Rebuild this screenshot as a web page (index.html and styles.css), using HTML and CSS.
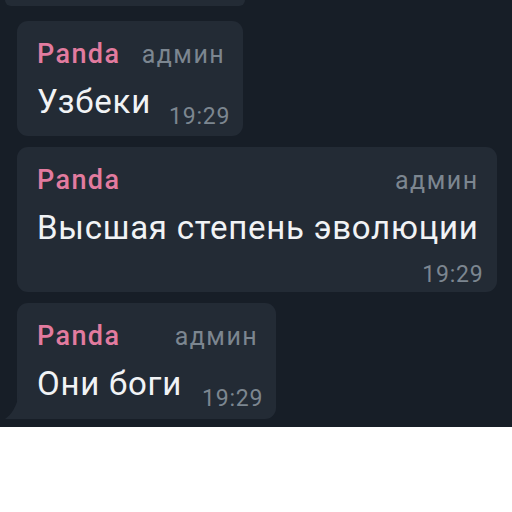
FILE: index.html
```html
<!DOCTYPE html>
<html lang="ru">
<head>
  <meta charset="UTF-8" />
  <meta name="viewport" content="width=device-width, initial-scale=1.0" />
  <title>Чат</title>
  <link rel="stylesheet" href="styles.css">
</head>
<body>
  <div class="chat">
    <div class="prev-bubble"></div>

    <div class="bubble">
      <div class="bubble-head">
        <span class="name">Panda</span>
        <span class="role">админ</span>
      </div>
      <div class="bubble-body">
        <span class="text">Узбеки</span>
        <span class="time">19:29</span>
      </div>
    </div>

    <div class="bubble">
      <div class="bubble-head">
        <span class="name">Panda</span>
        <span class="role">админ</span>
      </div>
      <div class="bubble-body wrap">
        <span class="text">Высшая степень эволюции</span>
        <span class="time">19:29</span>
      </div>
    </div>

    <div class="bubble last">
      <div class="bubble-head">
        <span class="name">Panda</span>
        <span class="role">админ</span>
      </div>
      <div class="bubble-body">
        <span class="text">Они боги</span>
        <span class="time">19:29</span>
      </div>
      <svg class="tail" width="14" height="26" viewBox="0 0 14 26">
        <path d="M14 0 L14 26 L0 26 C6 22 12 14 14 0 Z" fill="#232b35"/>
      </svg>
    </div>
  </div>
</body>
</html>
```

FILE: styles.css
```css
* {
  box-sizing: border-box;
  font-family: Roboto, 'Noto Sans', sans-serif;
}
body {
  margin: 0;
  padding: 0;
  background: #ffffff;
}
.chat {
  background: #171e27;
  height: 427px;
  padding: 0 14px 0 17px;
  display: flex;
  flex-direction: column;
  align-items: flex-start;
  gap: 11px;
}
.prev-bubble {
  width: 240px;
  height: 6px;
  margin-left: -12px;
  margin-bottom: 4px;
  background: #232b35;
  border-radius: 0 0 10px 10px;
}
.bubble {
  position: relative;
  background: #232b35;
  border-radius: 11px;
  padding: 19px 18px 14px 20px;
  max-width: 481px;
}
.bubble.last {
  border-bottom-left-radius: 0;
  padding-bottom: 15px;
}
.bubble-head {
  display: flex;
  justify-content: space-between;
  align-items: baseline;
  gap: 18px;
  line-height: 28px;
}
.name {
  color: #e27b9f;
  font-size: 27px;
  font-weight: 500;
  letter-spacing: 1.4px;
}
.role {
  color: #7c8690;
  font-size: 25px;
  letter-spacing: 1.5px;
}
.bubble-body {
  display: flex;
  align-items: flex-end;
  gap: 18px;
  margin-top: 13px;
}
.last .bubble-body {
  gap: 20px;
}
.text {
  color: #f1f3f5;
  font-size: 33px;
  line-height: 40px;
  letter-spacing: 0.75px;
  white-space: nowrap;
}
.time {
  color: #7c8690;
  font-size: 23px;
  line-height: 26px;
  letter-spacing: 0.8px;
  margin-bottom: -8px;
  margin-right: -5px;
}
.bubble-body.wrap {
  flex-direction: column;
  gap: 0;
}
.bubble-body.wrap .time {
  margin-top: 14px;
  margin-bottom: -10px;
}
.tail {
  position: absolute;
  left: -12px;
  bottom: 0;
}
```
